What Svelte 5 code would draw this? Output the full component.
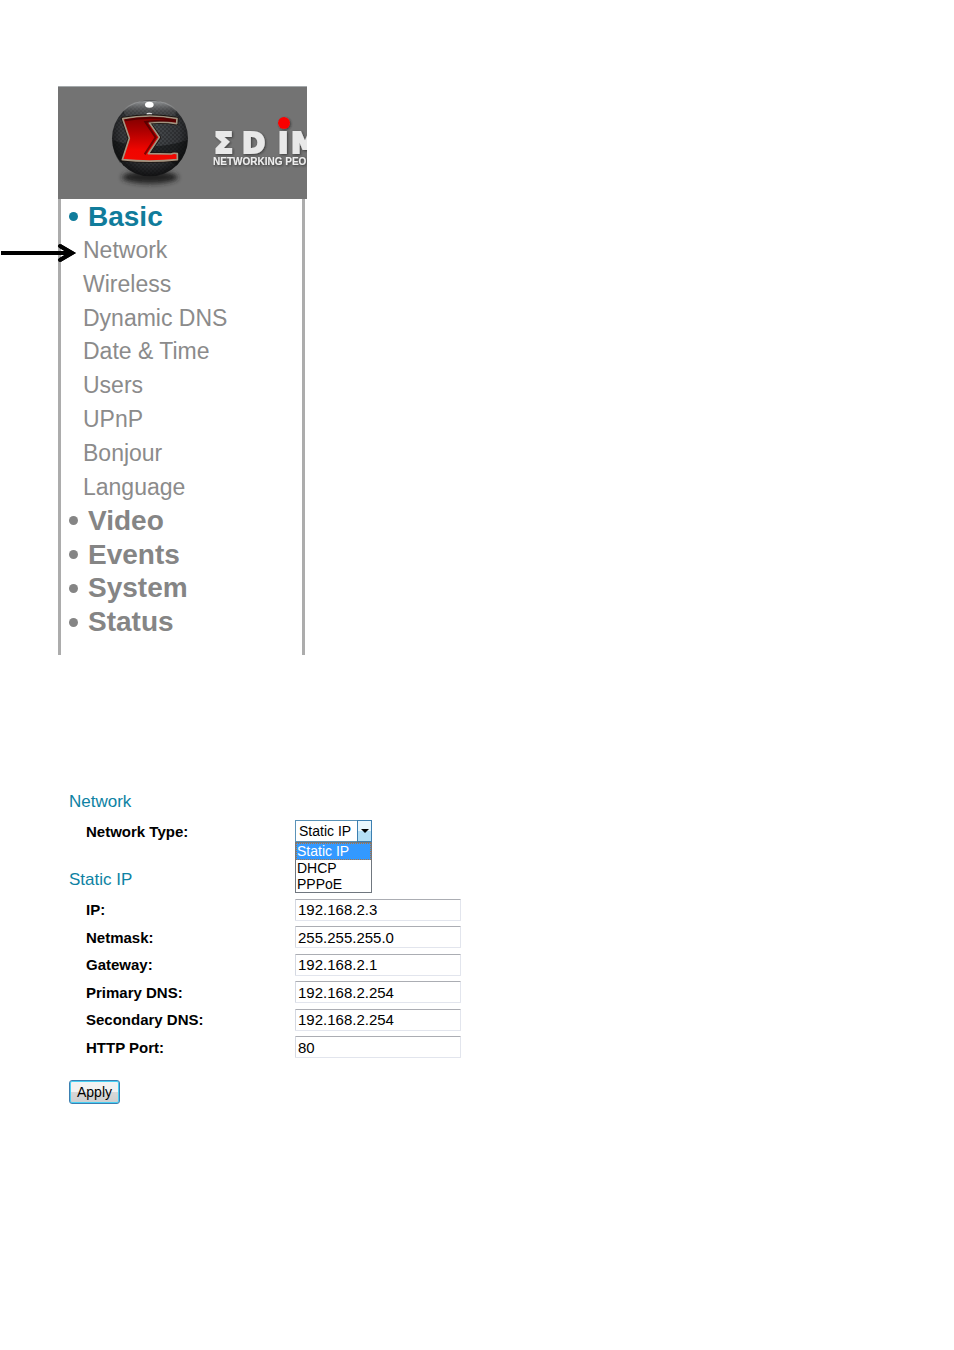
<script>
  const menu = [
    { label: 'Basic', top: true, active: true },
    { label: 'Network', pointed: true },
    { label: 'Wireless' },
    { label: 'Dynamic DNS' },
    { label: 'Date & Time' },
    { label: 'Users' },
    { label: 'UPnP' },
    { label: 'Bonjour' },
    { label: 'Language' },
    { label: 'Video', top: true },
    { label: 'Events', top: true },
    { label: 'System', top: true },
    { label: 'Status', top: true }
  ];
  const types = ['Static IP', 'DHCP', 'PPPoE'];
  let type = $state('Static IP');
  let fields = $state([
    { id: 'ip', label: 'IP:', value: '192.168.2.3' },
    { id: 'netmask', label: 'Netmask:', value: '255.255.255.0' },
    { id: 'gateway', label: 'Gateway:', value: '192.168.2.1' },
    { id: 'dns1', label: 'Primary DNS:', value: '192.168.2.254' },
    { id: 'dns2', label: 'Secondary DNS:', value: '192.168.2.254' },
    { id: 'port', label: 'HTTP Port:', value: '80' }
  ]);
</script>

<div class="page">
  <aside>
    <header>
      <svg class="brand" width="249" height="112" viewBox="0 0 249 112">
        <defs>
          <radialGradient id="ball" cx="50%" cy="42%" r="60%">
            <stop offset="0" stop-color="#4a4e51" />
            <stop offset=".65" stop-color="#35373a" />
            <stop offset="1" stop-color="#0e0e0f" />
          </radialGradient>
          <linearGradient id="gloss" x1="0" y1="0" x2="0" y2="1">
            <stop offset="0" stop-color="#b5b8ba" stop-opacity=".8" />
            <stop offset=".5" stop-color="#777" stop-opacity=".3" />
            <stop offset="1" stop-color="#555" stop-opacity="0" />
          </linearGradient>
          <linearGradient id="red" x1="0" y1="0" x2="0" y2="1">
            <stop offset="0" stop-color="#7d0000" />
            <stop offset=".35" stop-color="#b00000" />
            <stop offset=".75" stop-color="#f00500" />
            <stop offset="1" stop-color="#f20800" />
          </linearGradient>
          <pattern id="mesh" width="12" height="12" patternUnits="userSpaceOnUse">
            <circle cx="3" cy="3" r="2.5" fill="#0a0b0d" />
            <circle cx="9" cy="9" r="2.5" fill="#0a0b0d" />
          </pattern>
          <filter id="soft" x="-30%" y="-60%" width="160%" height="220%">
            <feGaussianBlur stdDeviation="8" />
          </filter>
          <filter id="glow" x="-50%" y="-50%" width="200%" height="200%">
            <feGaussianBlur stdDeviation="2" />
          </filter>
          <filter id="drop" x="-10%" y="-20%" width="120%" height="150%">
            <feDropShadow dx="1" dy="1" stdDeviation="1" flood-color="#222" flood-opacity=".7" />
          </filter>
        </defs>
        <g transform="translate(42 3) scale(.33333)">
          <ellipse cx="150" cy="262" rx="84" ry="19" fill="#222" filter="url(#soft)" />
          <circle cx="150" cy="145" r="114" fill="url(#ball)" />
          <circle cx="150" cy="145" r="112" fill="url(#mesh)" opacity=".6" />
          <path d="M37 150Q150 188 263 150A114 114 0 0 1 232 225Q150 180 60 218A114 114 0 0 1 37 150Z" fill="#08090a" opacity=".5" />
          <ellipse cx="150" cy="65" rx="78" ry="33" fill="url(#gloss)" />
          <ellipse cx="148" cy="44" rx="13" ry="9" fill="#fff" filter="url(#glow)" />
          <ellipse cx="148" cy="72" rx="9" ry="4" fill="#ddd" filter="url(#glow)" />
          <path d="M68 86Q150 70 231 86L230 101Q190 94 148 98L178 142L145 191L214 192Q220 188 232 191V209Q150 218 67 209L88 145Z" fill="url(#red)" stroke="#1b1410" stroke-width="10" stroke-linejoin="round" />
          <path d="M68 86Q150 70 231 86L230 101Q190 94 148 98L178 142L145 191L214 192Q220 188 232 191V209Q150 218 67 209L88 145Z" fill="url(#red)" stroke="#a39480" stroke-width="5" stroke-linejoin="round" />
          <path d="M75 91Q150 76 225 90V94Q185 89 136 96L167 142L134 193" fill="none" stroke="#300" stroke-width="6" opacity=".6" />
        </g>
        <g filter="url(#drop)">
          <g class="word">
            <text x="156" y="66">Σ</text>
            <text x="184" y="66">D</text>
            <text x="220" y="66">I</text>
            <text x="233" y="66">M</text>
          </g>
          <circle cx="226" cy="36" r="6" fill="#fa0505" />
          <text class="tag" x="155" y="78">NETWORKING PEO</text>
        </g>
      </svg>
    </header>
    <nav aria-label="Settings">
      {#each menu as item}
        <a href="#{item.label}" class:top={item.top} class:active={item.active}>
          {#if item.top}<span class="dot"></span>{/if}{item.label}
          {#if item.pointed}
            <svg class="arrow" width="76" height="20" viewBox="0 0 76 20" aria-hidden="true">
              <path d="M1 10H71M60 3L72 10L60 17" fill="none" stroke="#000" stroke-width="4" />
              <path d="M60 3L72 10L60 17" fill="none" stroke="#000" stroke-width="4" stroke-linecap="round" />
            </svg>
          {/if}
        </a>
      {/each}
    </nav>
  </aside>

  <form onsubmit={(e) => e.preventDefault()}>
    <h2>Network</h2>
    <div class="row type">
      <label for="type">Network Type:</label>
      <div class="combo">
        <select id="type" bind:value={type}>
          {#each types as t}<option>{t}</option>{/each}
        </select>
        <span class="drop"><svg width="8" height="4" viewBox="0 0 8 4"><path d="M0 0H8L4 4Z" /></svg></span>
        <ul>
          {#each types as t}<li class:chosen={t === type}>{t}</li>{/each}
        </ul>
      </div>
    </div>
    <h2>Static IP</h2>
    <div class="fields">
      {#each fields as f}
        <div class="row">
          <label for={f.id}>{f.label}</label>
          <input id={f.id} type="text" bind:value={f.value} />
        </div>
      {/each}
    </div>
    <button type="submit">Apply</button>
  </form>
</div>

<style>
  :global(body) { background: #fff; }
  .page {
    box-sizing: border-box;
    padding: 86px 58px;
    font-family: "Liberation Sans", Arial, sans-serif;
    color: #000;
  }
  aside { max-width: 249px; }
  header { background: #737373; border-top: 1px solid #a4a9ab; overflow: hidden; }
  .brand { display: block; }
  .word text {
    font: bold 28px "DejaVu Sans", sans-serif;
    fill: #e8e8e8;
    stroke: #e8e8e8;
    stroke-width: 2;
  }
  .tag { font: bold 10px "Liberation Sans", sans-serif; fill: #eee; }

  nav {
    display: grid;
    grid-auto-rows: 1fr;
    box-sizing: border-box;
    height: 456px;
    margin-right: 2px;
    padding: 1px 8px 16px;
    border: solid #acacac;
    border-width: 0 3px;
  }
  nav a {
    position: relative;
    display: flex;
    align-items: center;
    padding-left: 14px;
    font-size: 23px;
    color: #8b8b8b;
    text-decoration: none;
    white-space: nowrap;
  }
  nav a.top { gap: 10px; padding-left: 0; font-size: 28px; font-weight: bold; color: #858585; }
  nav a.active { color: #107c9b; }
  .dot { width: 9px; height: 9px; border-radius: 50%; background: currentColor; }
  .arrow { position: absolute; right: 100%; top: 9px; margin-right: -7px; }

  form { padding: 136px 0 0 11px; }
  h2 { margin: 0; font-size: 17px; line-height: 22px; font-weight: normal; color: #0d82a3; }
  .row {
    display: grid;
    grid-template-columns: 209px minmax(0, 166px);
    align-items: center;
    padding-left: 17px;
  }
  .type { margin: 7px 0 27px; }
  label { font-size: 15px; font-weight: bold; }
  .combo { position: relative; width: 77px; }
  select {
    display: block;
    appearance: none;
    box-sizing: border-box;
    width: 100%;
    height: 22px;
    padding: 0 0 0 3px;
    border: 1px solid #5b93b8;
    border-radius: 0;
    background: #fff;
    font: 14px "Liberation Sans", Arial, sans-serif;
    color: #000;
  }
  .drop {
    position: absolute;
    inset: 0 0 0 auto;
    box-sizing: border-box;
    width: 15px;
    display: grid;
    place-items: center;
    border: 1px solid #3c7fb1;
    background: linear-gradient(#e8f6fd 50%, #b5dff5 50%);
    pointer-events: none;
  }
  .combo ul {
    position: absolute;
    top: 100%;
    left: 0;
    right: 0;
    margin: 0;
    padding: 0;
    list-style: none;
    border: 1px solid #70777f;
    background: #fff;
    font-size: 14px;
    line-height: 16px;
  }
  li { padding: 0 1px; }
  li.chosen { background: #3399ff; color: #fff; outline: 1px dotted #b57438; outline-offset: -1px; line-height: 17px; }
  .fields { display: grid; grid-auto-rows: 1fr; height: 165px; margin-top: 5px; }
  input {
    box-sizing: border-box;
    width: 100%;
    height: 22px;
    padding: 0 2px;
    border: 1px solid #e2e5ed;
    border-top-color: #abadb3;
    border-left-color: #d5d9e2;
    border-radius: 1px;
    background: #fff;
    font: 15px "Liberation Sans", Arial, sans-serif;
    color: #000;
  }
  button {
    display: block;
    height: 24px;
    margin-top: 19px;
    padding: 0 7px;
    border: 1px solid #3c7fb1;
    border-radius: 3px;
    background: linear-gradient(#f2f2f2 50%, #d8d8d8 50%, #cfcfcf);
    box-shadow: inset 0 0 0 1px #48d0f4;
    font: 14px "Liberation Sans", Arial, sans-serif;
    color: #000;
  }
</style>
